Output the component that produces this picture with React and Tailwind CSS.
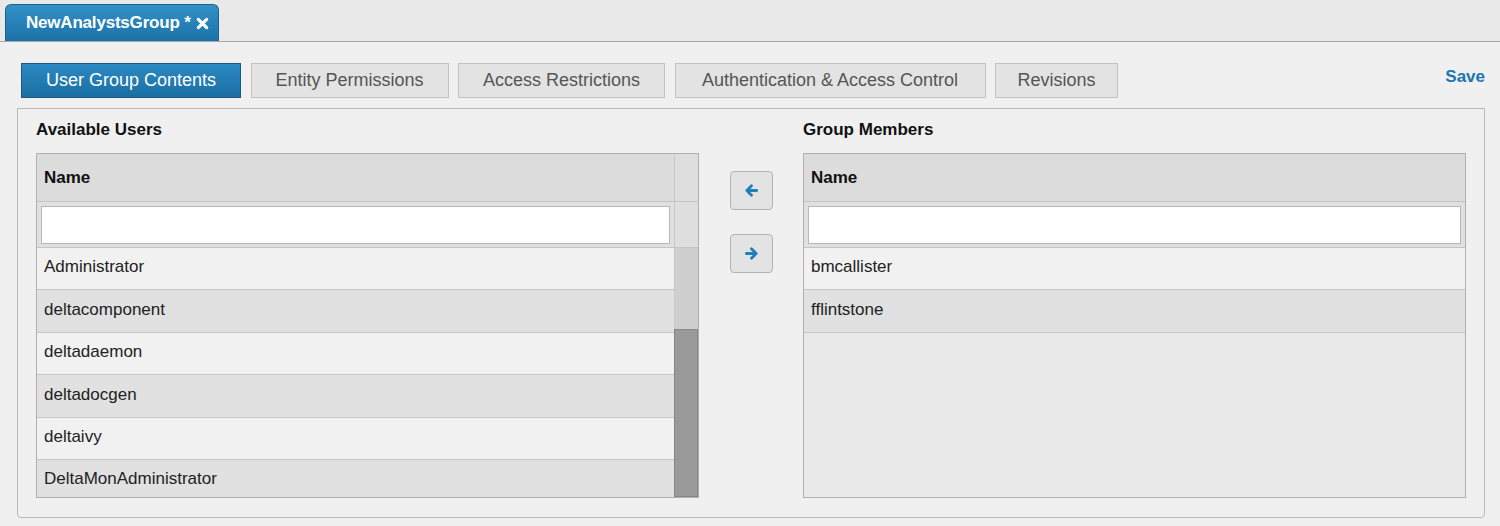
import React from 'react';

const LEFT_USERS = ['Administrator', 'deltacomponent', 'deltadaemon', 'deltadocgen', 'deltaivy', 'DeltaMonAdministrator'];
const MEMBERS = ['bmcallister', 'fflintstone'];

const TABS = [
    { label: 'User Group Contents', width: 'w-[220px]', active: true },
    { label: 'Entity Permissions', width: 'w-[198px]' },
    { label: 'Access Restrictions', width: 'w-[207px]' },
    { label: 'Authentication & Access Control', width: 'w-[311px]' },
    { label: 'Revisions', width: 'w-[123px]' },
];

const Arrow = ({ dir }) => (
    <svg width="15" height="15" viewBox="0 0 16 16" fill="none" stroke="#1f7fb8" strokeWidth="3" strokeLinecap="round" strokeLinejoin="round">
        {dir === 'left' ? <path d="M13.5 8H3 M8 3 L3 8 L8 13" /> : <path d="M2.5 8H13 M8 3 L13 8 L8 13" />}
    </svg>
);

const CloseIcon = () => (
    <svg width="13" height="13" viewBox="0 0 14 14" fill="none" stroke="#ffffff" strokeWidth="3.4" strokeLinecap="round">
        <path d="M2.5 2.5 L11.5 11.5 M11.5 2.5 L2.5 11.5" />
    </svg>
);

const Row = ({ name, index }) => (
    <div
        className={`h-[42.4px] shrink-0 flex items-center pl-[7px] pb-[3px] border-b border-[#c6c6c6] text-[17px] text-[#222] ${
            index % 2 === 0 ? 'bg-[#f1f1f1]' : 'bg-[#e1e1e1]'
        }`}
    >
        {name}
    </div>
);

const HeaderRows = ({ scroll }) => (
    <>
        <div className="h-[48px] shrink-0 flex border-b border-[#c4c4c4] bg-[#dcdcdc]">
            <div className="flex-1 flex items-center pl-[7px] font-bold text-[17px] text-[#111]">Name</div>
            {scroll && <div className="w-[24px] border-l border-[#c8c8c8] bg-[#dedede]" />}
        </div>
        <div className="h-[46px] shrink-0 flex border-b border-[#c4c4c4] bg-[#e0e0e0]">
            <div className="flex-1 flex items-center px-[4px]">
                <input className="w-full h-[38px] bg-white border border-[#b7b7b7] outline-none" />
            </div>
            {scroll && <div className="w-[24px] border-l border-[#c8c8c8] bg-[#dedede]" />}
        </div>
    </>
);

export default function App() {
    return (
        <div className="w-[1500px] h-[526px] overflow-hidden bg-[#f0f0f0] font-['Liberation_Sans',Arial,sans-serif]">
            {/* Document tab strip */}
            <div className="h-[42px] flex items-end pl-[5px] bg-[#e9e9e9] border-b border-[#a9a9a9]">
                <div className="h-[37px] w-[214px] flex items-center gap-[5px] pl-[20px] rounded-t-[6px] border border-b-0 border-[#1b5f8d] bg-gradient-to-b from-[#3191c8] to-[#1c72a7] text-white">
                    <span className="text-[17px] font-bold tracking-[-0.2px]">NewAnalystsGroup *</span>
                    <CloseIcon />
                </div>
            </div>

            <div className="ml-[17px] w-[1468px] mt-[21px]">
                {/* Section tabs */}
                <div className="h-[35px] flex items-start justify-between pl-[4px]">
                    <div className="flex gap-[9.5px]">
                        {TABS.map((tab) => (
                            <button
                                key={tab.label}
                                className={`${tab.width} h-[35px] flex items-center justify-center text-[18px] border ${
                                    tab.active
                                        ? 'bg-gradient-to-b from-[#2b8ac2] to-[#1a6ea3] border-[#1c5a85] text-white'
                                        : 'bg-[#e3e3e3] border-[#c2c2c2] text-[#555]'
                                }`}
                            >
                                {tab.label}
                            </button>
                        ))}
                    </div>
                    <span className="leading-[28px] text-[17px] font-bold text-[#1a76b3]">Save</span>
                </div>

                {/* Contents panel */}
                <div className="mt-[10px] h-[410px] flex border border-[#b8b8b8] rounded-b-[4px] px-[18px] pb-[19px]">
                    {/* Available users */}
                    <div className="flex-1 flex flex-col">
                        <div className="pt-[10px] mb-[12px] leading-[22px] text-[17px] font-bold text-[#111]">Available Users</div>
                        <div className="flex-1 flex flex-col border border-[#b0b0b0] overflow-hidden">
                            <HeaderRows scroll />
                            <div className="flex-1 flex min-h-0">
                                <div className="flex-1 flex flex-col overflow-hidden">
                                    {LEFT_USERS.map((u, i) => (
                                        <Row key={u} name={u} index={i} />
                                    ))}
                                </div>
                                <div className="w-[24px] flex flex-col">
                                    <div className="h-[81px] bg-[#cfcfcf] border-l border-[#c8c8c8]" />
                                    <div className="flex-1 bg-[#9a9a9a] border border-[#868686]" />
                                </div>
                            </div>
                        </div>
                    </div>

                    {/* Move buttons */}
                    <div className="w-[104px] flex flex-col items-center pt-[62px] gap-[24px]">
                        <button className="w-[43px] h-[39px] flex items-center justify-center rounded-[4px] bg-[#e3e3e3] border border-[#b3b3b3]">
                            <Arrow dir="left" />
                        </button>
                        <button className="w-[43px] h-[39px] flex items-center justify-center rounded-[4px] bg-[#e3e3e3] border border-[#b3b3b3]">
                            <Arrow dir="right" />
                        </button>
                    </div>

                    {/* Group members */}
                    <div className="flex-1 flex flex-col">
                        <div className="pt-[10px] mb-[12px] leading-[22px] text-[17px] font-bold text-[#111]">Group Members</div>
                        <div className="flex-1 flex flex-col border border-[#b0b0b0] overflow-hidden">
                            <HeaderRows />
                            <div className="flex-1 flex flex-col bg-[#e9e9e9]">
                                {MEMBERS.map((u, i) => (
                                    <Row key={u} name={u} index={i} />
                                ))}
                            </div>
                        </div>
                    </div>
                </div>
            </div>
        </div>
    );
}
